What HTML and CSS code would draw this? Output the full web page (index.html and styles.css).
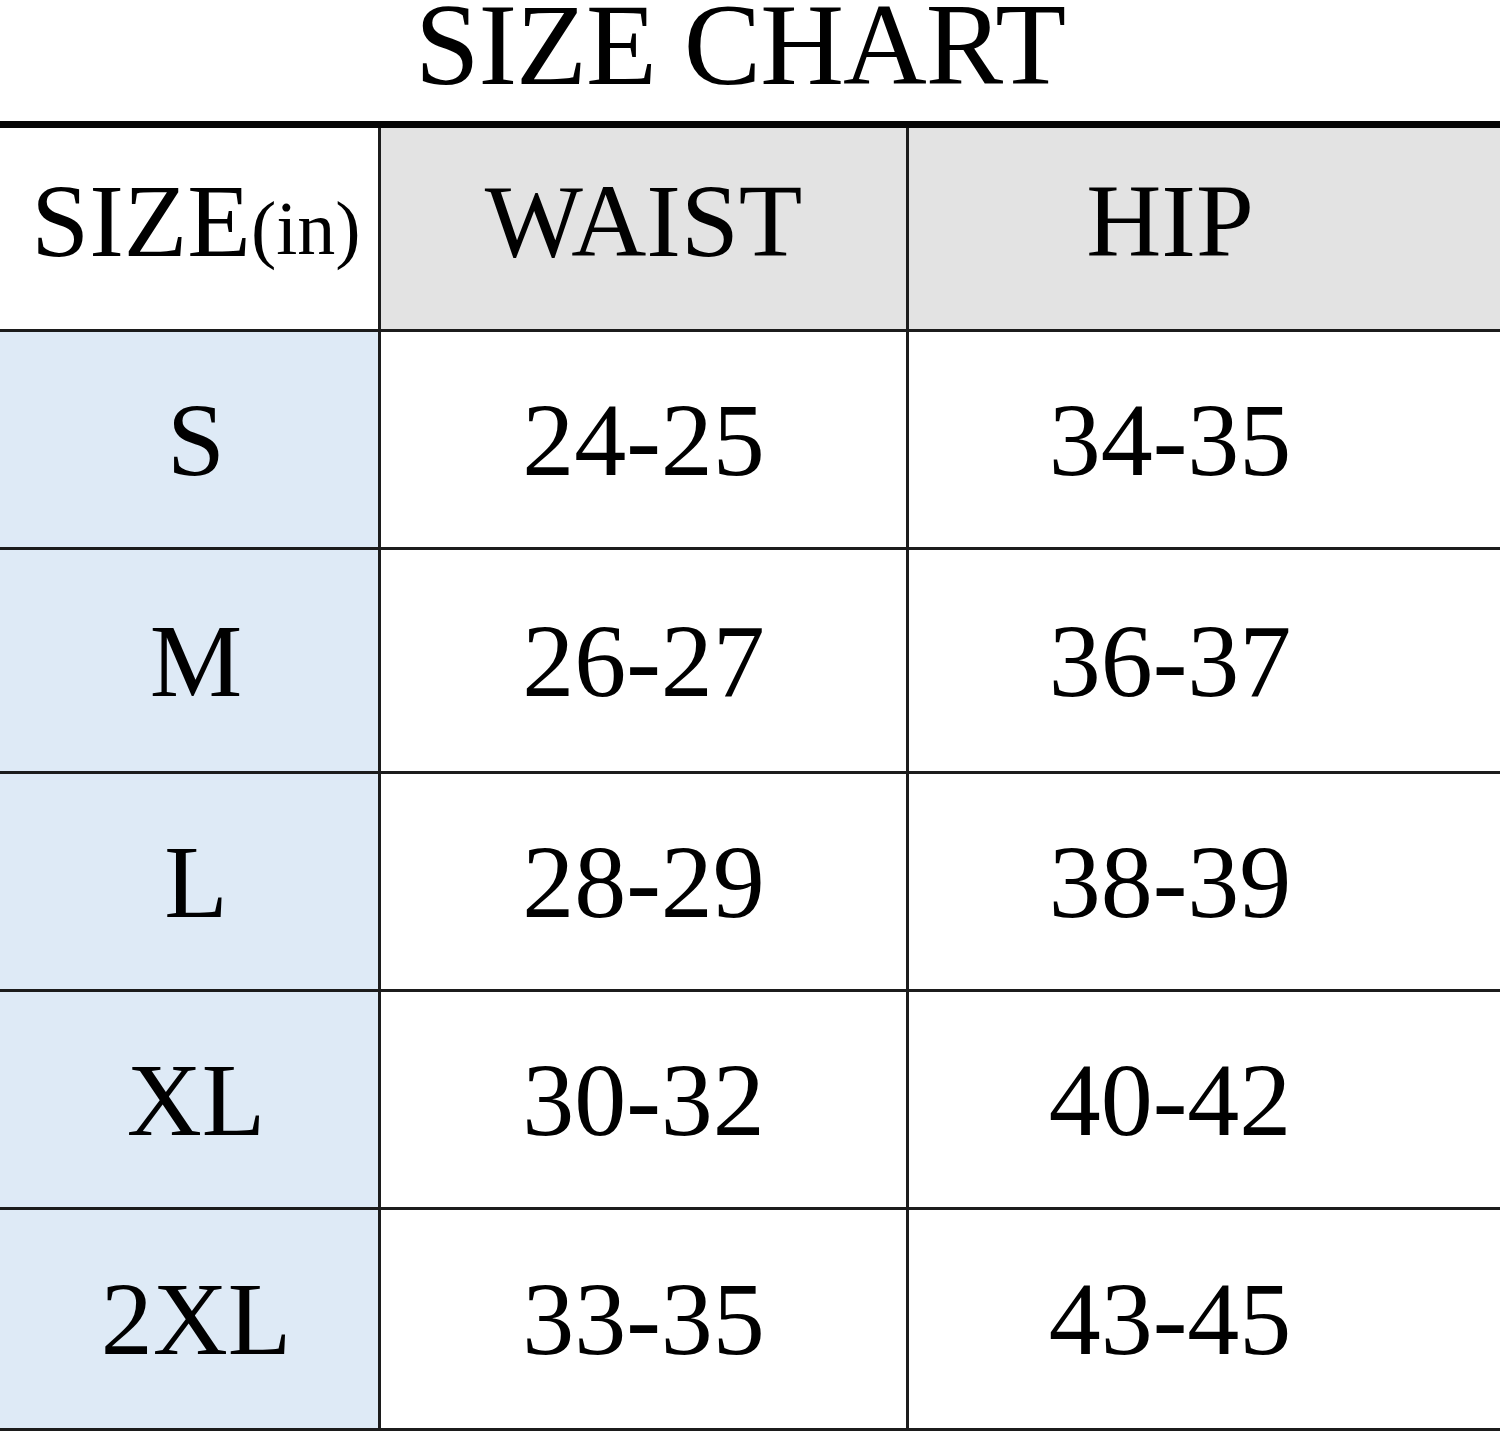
FILE: index.html
```html
<!DOCTYPE html>
<html lang="en">
<head>
<meta charset="utf-8">
<title>Size Chart</title>
<link rel="stylesheet" href="styles.css">
</head>
<body>
<h1 class="chart-title">SIZE CHART</h1>
<div class="chart" role="table">
  <div class="cell head first" role="columnheader">SIZE<span class="unit">(in)</span></div>
  <div class="cell head" role="columnheader">WAIST</div>
  <div class="cell head last" role="columnheader">HIP</div>

  <div class="cell size" role="rowheader">S</div>
  <div class="cell">24-25</div>
  <div class="cell last">34-35</div>

  <div class="cell size" role="rowheader">M</div>
  <div class="cell">26-27</div>
  <div class="cell last">36-37</div>

  <div class="cell size" role="rowheader">L</div>
  <div class="cell">28-29</div>
  <div class="cell last">38-39</div>

  <div class="cell size" role="rowheader">XL</div>
  <div class="cell">30-32</div>
  <div class="cell last">40-42</div>

  <div class="cell size" role="rowheader">2XL</div>
  <div class="cell">33-35</div>
  <div class="cell last">43-45</div>
</div>
</body>
</html>
```
FILE: styles.css
```css
html, body {
  margin: 0;
  padding: 0;
  background: #ffffff;
}

body {
  font-family: "Liberation Serif", "Times New Roman", serif;
  color: #000;
  width: 1500px;
}

.chart-title {
  margin: 0;
  height: 121px;
  box-sizing: border-box;
  padding: 0 20px 31px 0;
  font-size: 116px;
  font-weight: normal;
  line-height: 90px;
  text-align: center;
  letter-spacing: -1px;
}

.chart {
  display: grid;
  grid-template-columns: 378px 525px 1fr;
  grid-template-rows: 201px 215px 221px 215px 215px 218px;
  gap: 3px;
  background: #1c1c1c;
  border-top: 7px solid #050505;
  border-bottom: 3px solid #1c1c1c;
}

.cell {
  display: flex;
  align-items: center;
  justify-content: center;
  background: #ffffff;
  font-size: 104px;
  line-height: 1;
  white-space: nowrap;
}

.cell.head {
  background: #e3e3e3;
  padding-bottom: 15px;
}

.cell.head.first {
  background: #ffffff;
  padding-left: 14px;
  align-items: center;
}

.cell.size {
  background: #deeaf6;
  padding-left: 14px;
}

.cell.last {
  padding-right: 69px;
}

.unit {
  font-size: 76px;
  align-self: center;
  margin-top: 14px;
}
```
